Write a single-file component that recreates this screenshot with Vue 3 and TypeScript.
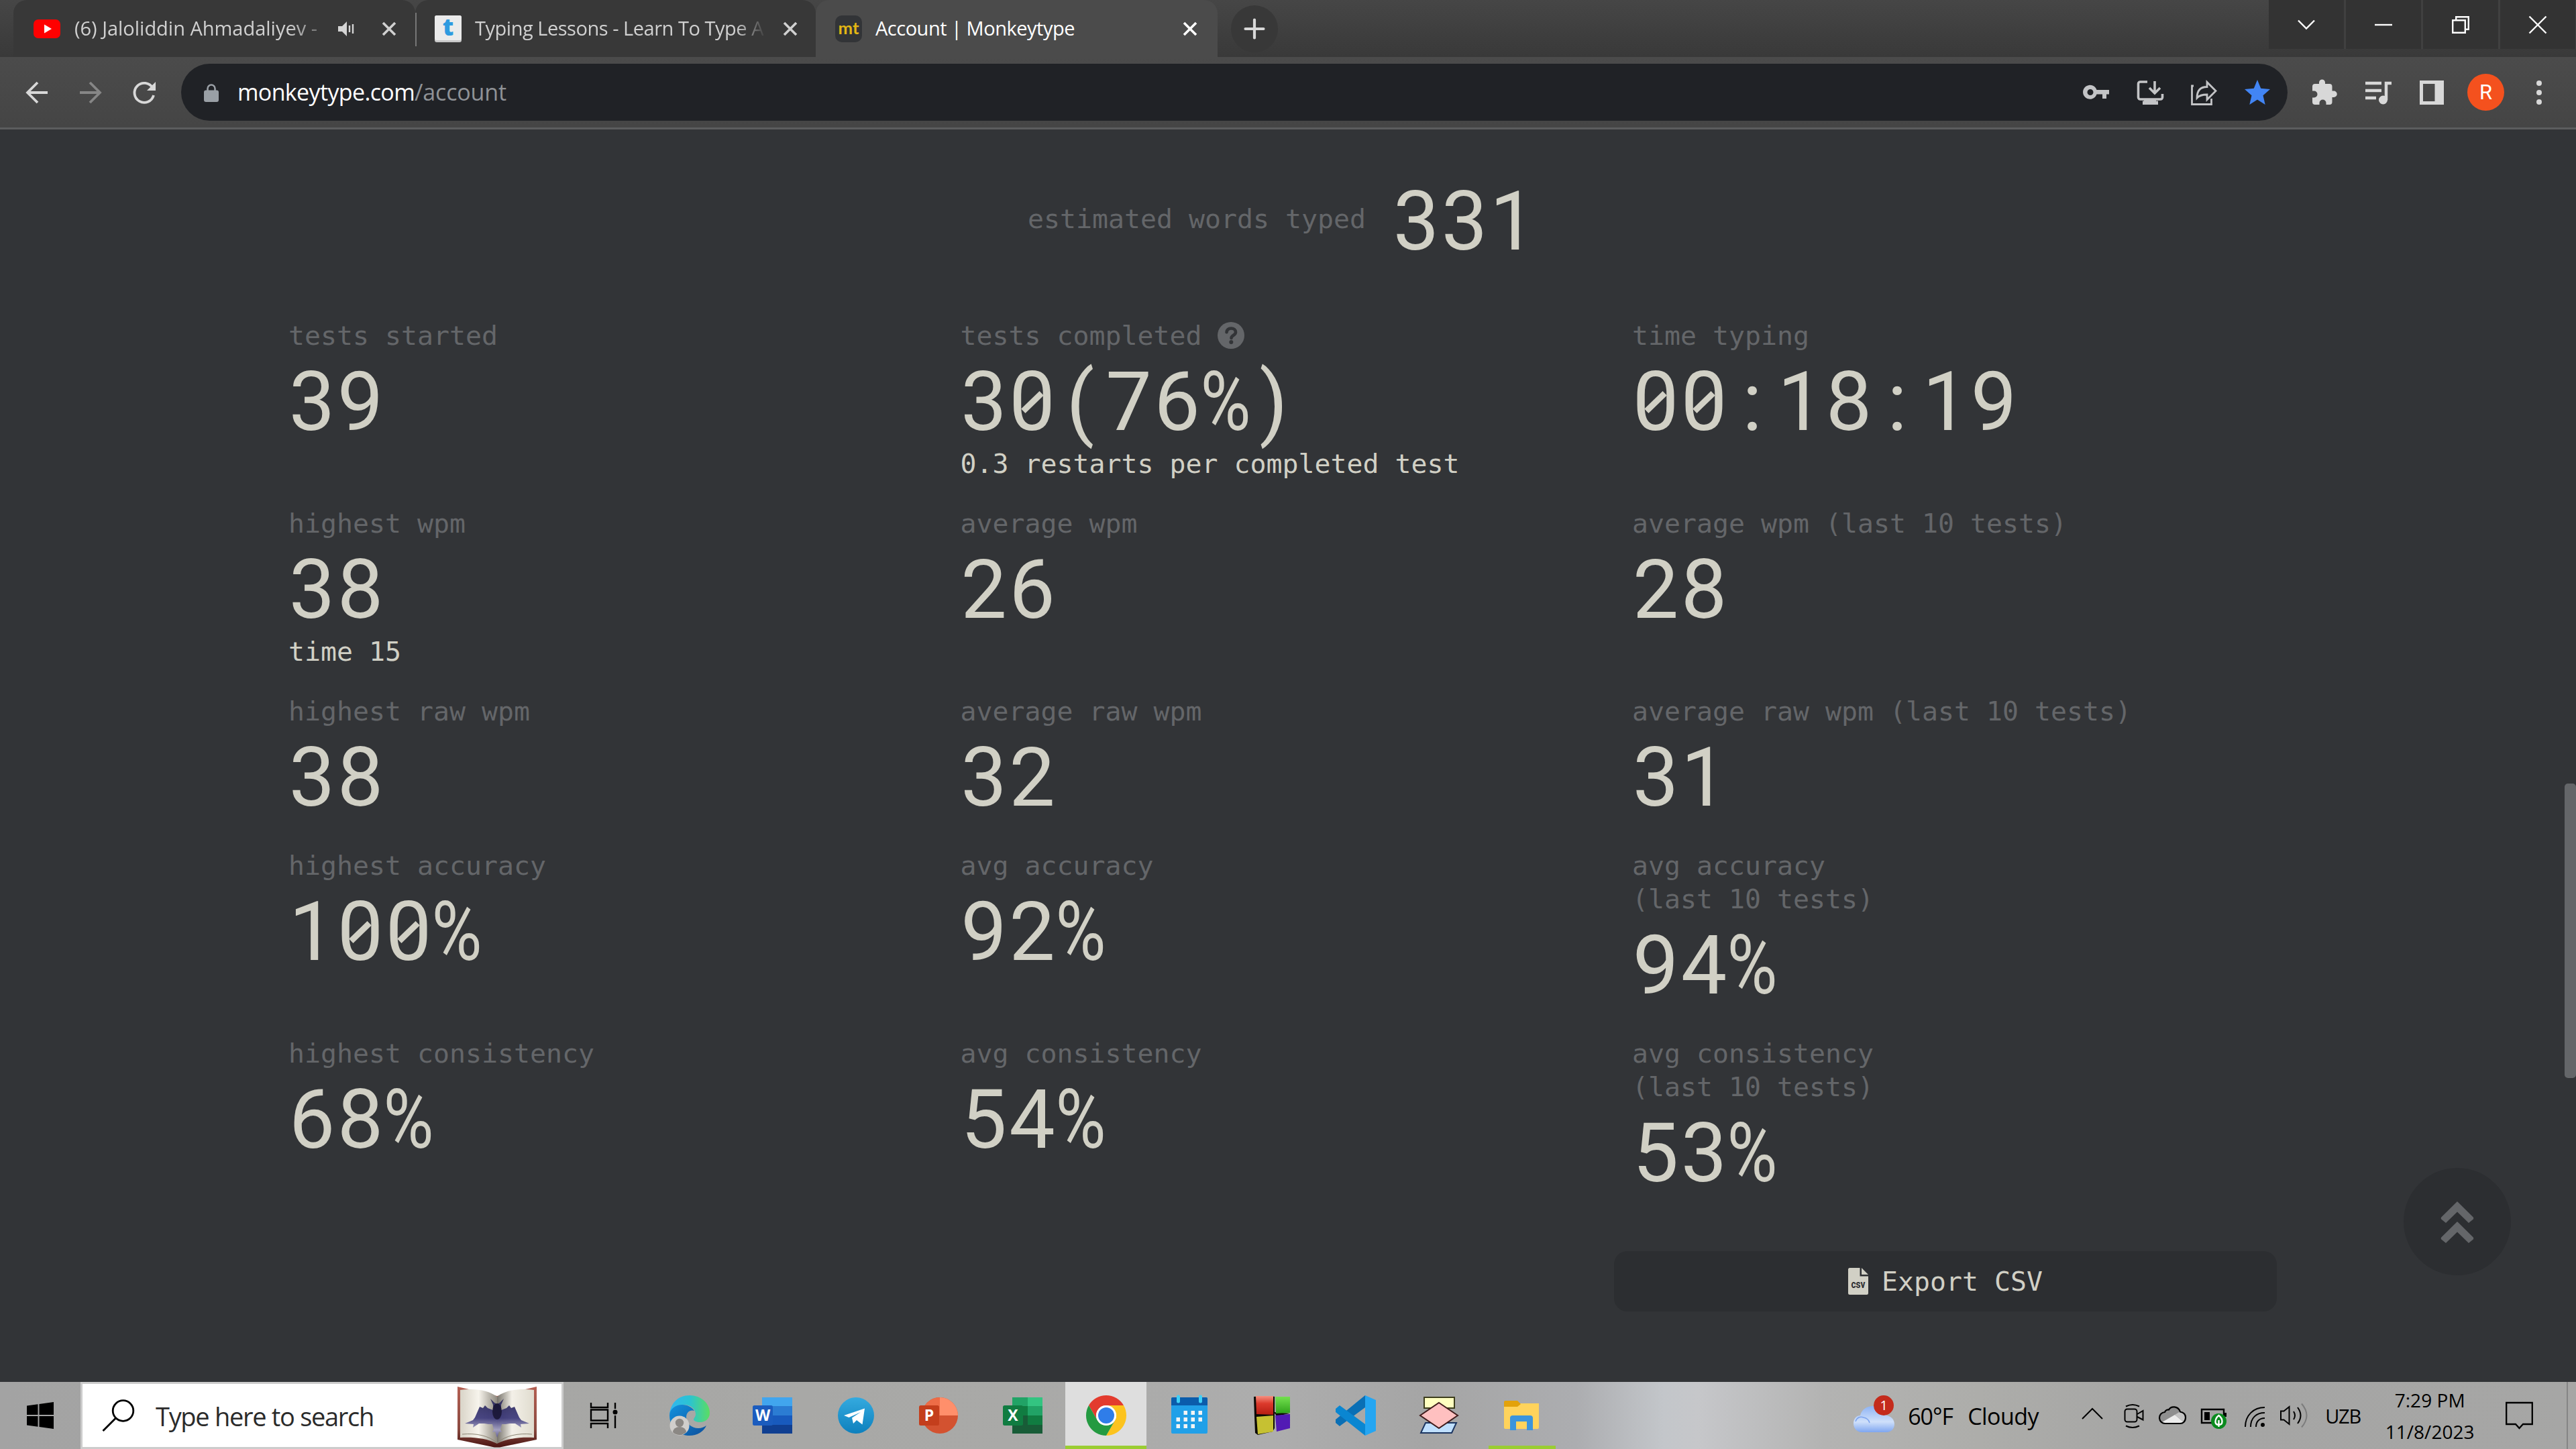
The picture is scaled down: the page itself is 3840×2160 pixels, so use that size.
<script setup lang="ts">
import type { Directive } from 'vue'

interface Stat {
  label: string[]
  value: string
  sub?: string
  help?: boolean
}

const stats: Stat[] = [
  { label: ['tests started'], value: '39' },
  { label: ['tests completed'], value: '30(76%)', sub: '0.3 restarts per completed test', help: true },
  { label: ['time typing'], value: '00:18:19' },
  { label: ['highest wpm'], value: '38', sub: 'time 15' },
  { label: ['average wpm'], value: '26' },
  { label: ['average wpm (last 10 tests)'], value: '28' },
  { label: ['highest raw wpm'], value: '38' },
  { label: ['average raw wpm'], value: '32' },
  { label: ['average raw wpm (last 10 tests)'], value: '31' },
  { label: ['highest accuracy'], value: '100%' },
  { label: ['avg accuracy'], value: '92%' },
  { label: ['avg accuracy', '(last 10 tests)'], value: '94%' },
  { label: ['highest consistency'], value: '68%' },
  { label: ['avg consistency'], value: '54%' },
  { label: ['avg consistency', '(last 10 tests)'], value: '53%' },
]

const glyphClass = (c: string): string => (c === '0' ? 'zero' : c === '%' ? 'pct' : '')

/* Tracks a line of text in or out so that it fills the given width in pixels. */
const vFit: Directive<HTMLElement, number> = {
  mounted(el, binding) {
    const natural = el.getBoundingClientRect().width
    const count = (el.textContent ?? '').length
    el.style.letterSpacing = `${(binding.value - natural) / count}px`
  },
}
</script>

<template>
  <div class="screen">
    <header class="tabstrip">
      <div class="tab first">
        <svg class="fav" viewBox="0 0 40 40"><rect y="6" width="40" height="28" rx="7" fill="#f00" /><path d="M16 13.500l11 6.500-11 6.500z" fill="#fff" /></svg>
        <span class="title t1"><span v-fit="362">(6) Jaloliddin Ahmadaliyev -</span></span>
        <svg class="snd" viewBox="0 0 26 26"><path d="M1 9h6l7-7v22l-7-7H1z" fill="#d4d4d4" /><path d="M18 8v10M23 6v14" stroke="#d4d4d4" stroke-width="2.400" /></svg>
        <svg class="x" viewBox="0 0 22 22"><path d="M2 2l18 18M20 2L2 20" /></svg>
      </div>
      <div class="tab second">
        <svg class="fav" viewBox="0 0 40 40"><rect width="40" height="40" rx="3" fill="#c9c9c9" /><rect width="40" height="37" rx="3" fill="#ebebeb" /><text x="20" y="30" text-anchor="middle" font-family="Open Sans, sans-serif" font-weight="800" font-size="36" fill="#2e9be0">t</text></svg>
        <span class="title t2"><span v-fit="430">Typing Lessons - Learn To Type A</span></span>
        <svg class="x" viewBox="0 0 22 22"><path d="M2 2l18 18M20 2L2 20" /></svg>
      </div>
      <div class="tab active">
        <svg class="fav" viewBox="0 0 40 40"><rect width="40" height="40" rx="10" fill="#323437" /><text x="20" y="28" text-anchor="middle" font-family="Lato, sans-serif" font-weight="700" font-size="24" textLength="31" lengthAdjust="spacingAndGlyphs" fill="#e2b714">mt</text></svg>
        <span class="title t3"><span v-fit="297">Account | Monkeytype</span></span>
        <svg class="x" viewBox="0 0 22 22"><path d="M2 2l18 18M20 2L2 20" /></svg>
      </div>
      <div class="newtab"><svg viewBox="0 0 30 30"><path d="M15 1.500v27M1.500 15h27" stroke="#d8d8d8" stroke-width="4.200" stroke-linecap="round" /></svg></div>
      <div class="winbtns">
        <div><svg viewBox="0 0 26 26"><path d="M1 6.500l12 12 12-12" /></svg></div>
        <div><svg viewBox="0 0 26 26"><path d="M0 13h26" /></svg></div>
        <div><svg viewBox="0 0 26 26"><path d="M1.200 6.200h18.600v18.600H1.200zM6.200 6V1.200h18.600v18.600H20" /></svg></div>
        <div><svg viewBox="0 0 26 26"><path d="M.5.500l25 25M25.500.500l-25 25" /></svg></div>
      </div>
    </header>

    <div class="toolbar">
      <svg class="nav" viewBox="0 0 34 34"><path d="M33 17H3M18 2L3 17l15 15" /></svg>
      <svg class="nav dim" viewBox="0 0 34 34"><path d="M1 17h30M16 2l15 15-15 15" /></svg>
      <svg class="nav" viewBox="0 0 34 34"><path d="M29.500 10A14.500 14.500 0 1 0 31 21" /><path d="M34 1v13H21z" fill="#d8d8d8" stroke="none" /></svg>
      <div class="omnibox">
        <svg class="lock" viewBox="0 0 22 27"><path d="M5.500 11V7a5.500 5.500 0 0 1 11 0v4" fill="none" stroke="#9aa0a6" stroke-width="2.600" /><rect x="0" y="9.500" width="22" height="17.500" rx="3" fill="#9aa0a6" /></svg>
        <span class="url"><span class="host" v-fit="264">monkeytype.com</span><span v-fit="137">/account</span></span>
        <svg class="ob" viewBox="0 0 40 40"><path d="M30 17H20.500a10.500 10.500 0 1 0 0 6.500H29V30h6v-6.500h4V17zM11 25a4.500 4.500 0 1 1 0-9 4.500 4.500 0 0 1 0 9z" fill="#c3c4c6" transform="translate(0 -1)" /></svg>
        <svg class="ob" viewBox="0 0 40 40"><path d="M16 4H5.500A3 3 0 0 0 2.500 7v20a3 3 0 0 0 3 3h30a3 3 0 0 0 3-3v-5M27 3v17M19 13l8 8 8-8" fill="none" stroke="#c3c4c6" stroke-width="3.600" /><path d="M11 30h18v2.500h3V38H9v-5.500h2z" fill="#c3c4c6" /></svg>
        <svg class="ob" viewBox="0 0 40 40"><path d="M5 10H2.500v27.500h29V29M10 28c0-12 6-16.500 15-16.500V4.500l13 13-13 13v-7.500c-6 0-11 .5-15 5z" fill="none" stroke="#c3c4c6" stroke-width="2.800" stroke-linejoin="miter" /></svg>
        <svg class="ob" viewBox="0 0 40 40"><path d="M20 1l5.200 12.800L39 15l-10.500 9.200L31.700 38 20 30.600 8.300 38l3.200-13.800L1 15l13.800-1.200z" fill="#4285f4" /></svg>
      </div>
      <svg class="tb" viewBox="0 0 40 40"><path d="M34 17.500h-2.500V11a4 4 0 0 0-4-4H21V5a4.500 4.500 0 0 0-9 0v2H6a4 4 0 0 0-4 4v6.500h2.500a5 5 0 0 1 0 10H2V34a4 4 0 0 0 4 4h6.500v-2.500a5 5 0 0 1 10 0V38h5a4 4 0 0 0 4-4v-7H34a4.700 4.700 0 0 0 0-9.500z" fill="#d8d8d8" /></svg>
      <svg class="tb" viewBox="0 0 40 40"><path d="M1 6h24M1 17h24M1 28h16" stroke="#d8d8d8" stroke-width="4.500" /><circle cx="27.500" cy="31" r="6.500" fill="#d8d8d8" /><path d="M32 31V6h8" stroke="#d8d8d8" stroke-width="4.500" fill="none" /></svg>
      <svg class="tb" viewBox="0 0 40 40"><path d="M2 2h36v36H2zM7 7v26h17.500V7z" fill="#d8d8d8" fill-rule="evenodd" /></svg>
      <div class="avatar">R</div>
      <svg class="dots" viewBox="0 0 8 36"><circle cx="4" cy="4" r="4" /><circle cx="4" cy="18" r="4" /><circle cx="4" cy="32" r="4" /></svg>
    </div>

    <main class="page">
      <div class="estimated">
        <span class="lab">estimated words typed</span>
        <span class="val"><i v-for="(c, k) in '331'" :key="k" :class="glyphClass(c)">{{ c }}</i></span>
      </div>
      <div class="grid">
        <section v-for="(s, i) in stats" :key="i" class="stat">
          <div v-for="(l, j) in s.label" :key="j" class="lab">{{ l }}<svg v-if="s.help" class="help" viewBox="0 0 40 40"><circle cx="20" cy="20" r="20" fill="#646669" /><path d="M13.500 15.200c.5-4 3-5.700 6.700-5.700 4 0 6.800 2.200 6.800 5.700 0 4.600-6.500 4.400-6.500 8.800" fill="none" stroke="#323437" stroke-width="4.600" stroke-linecap="round" /><circle cx="20.300" cy="30" r="3" fill="#323437" /></svg></div>
          <div class="val"><i v-for="(c, k) in s.value" :key="k" :class="glyphClass(c)">{{ c }}</i></div>
          <div v-if="s.sub" class="sub">{{ s.sub }}</div>
        </section>
      </div>
      <div class="export">
        <svg viewBox="0 0 30 40"><path d="M2.500 0H17.500v12.500H30V37.500A2.500 2.500 0 0 1 27.500 40h-25A2.500 2.500 0 0 1 0 37.500v-35A2.500 2.500 0 0 1 2.500 0zM20 0l10 10H20z" fill="#d1d0c5" /><text x="15" y="30" text-anchor="middle" font-family="Roboto, sans-serif" font-weight="700" font-size="16" textLength="21" lengthAdjust="spacingAndGlyphs" fill="#2c2e31">csv</text></svg>
        <span>Export CSV</span>
      </div>
      <div class="totop"><svg viewBox="0 0 50 62"><path id="chev" d="M25 0L1.200 23.500q-1.200 1.500 0 3L8 32 25 15.600 42 32l6.800-5.500q1.200-1.500 0-3zM25 30L1.200 53.500q-1.200 1.500 0 3L8 62l17-16.400L42 62l6.800-5.500q1.200-1.500 0-3z" fill="#646669" /></svg></div>
      <div class="thumb"></div>
    </main>

    <footer class="taskbar">
      <div class="start"><svg viewBox="0 0 40 40"><path d="M0 5.500l16.500-2.300v15.900H0zM18.500 2.900L40 0v19.100H18.500zM0 20.900h16.500v15.900L0 34.500zM18.500 20.900H40V40l-21.500-2.900z" /></svg></div>
      <div class="search">
        <svg class="mag" viewBox="0 0 48 48"><circle cx="31.500" cy="17" r="15.300" /><path d="M20.500 28L1.500 47" /></svg>
        <span class="hint"><span v-fit="325">Type here to search</span></span>
        <svg class="book" viewBox="0 0 120 92">
          <defs>
            <linearGradient id="pgl"><stop offset="0" stop-color="#d9d4c8" /><stop offset=".5" stop-color="#f7f4ec" /><stop offset="1" stop-color="#8f8a80" /></linearGradient>
            <linearGradient id="pgr"><stop offset="0" stop-color="#77736b" /><stop offset=".4" stop-color="#f3f0e8" /><stop offset="1" stop-color="#e0dccf" /></linearGradient>
            <linearGradient id="cov" x2="0" y2="1"><stop offset="0" stop-color="#b45f52" /><stop offset=".7" stop-color="#8b4a40" /><stop offset="1" stop-color="#4a1512" /></linearGradient>
            <linearGradient id="ink" x2="0" y2="1"><stop offset="0" stop-color="#2a2758" /><stop offset=".5" stop-color="#3a3779" /><stop offset=".8" stop-color="#a5a2c4" /><stop offset="1" stop-color="#5a5796" /></linearGradient>
          </defs>
          <path d="M1 1l59 14L119 1v79L64 91.500h-8L1 80z" fill="url(#cov)" />
          <path d="M5 6c22-3 42 0 55 10v70C45 78 25 76 5 77z" fill="url(#pgl)" />
          <path d="M115 6c-22-3-42 0-55 10v70c15-8 35-10 55-9z" fill="url(#pgr)" />
          <path d="M8 72c20-2 40 2 52 13 12-11 32-15 52-13" fill="none" stroke="#8c8574" />
          <path d="M60 27l-4-2-6-6 4 9v8l-8-3-4-4-3 4-5-2-7 16-3 4-12 5 13 1-1 5 9-6 8 0 6 1 6 0 2 8-2 4 4-1 3 9 3-9 4 1-2-4 2-8 6 0 6-1 8 0 9 6-1-5 13-1-12-5-3-4-7-16-5 2-3-4-4 4-8 3v-8l4-9-6 6z" fill="url(#ink)" opacity=".92" />
          <ellipse cx="60" cy="38" rx="7" ry="12" fill="#15122e" opacity=".8" />
        </svg>
      </div>
      <div class="cell"><svg class="tv" viewBox="0 0 42 40"><g fill="none" stroke="#000" stroke-width="2.400"><path d="M2 1v7h25V1M2 39v-7h25v7M2 11.500h25v16H2z" /><path d="M38 1v9M38 20v19" /></g><circle cx="38" cy="15" r="3.500" /></svg></div>
      <div class="cell"><svg class="app" viewBox="0 0 60 60">
        <defs><linearGradient id="e1"><stop offset="0" stop-color="#31b6f0" /><stop offset=".5" stop-color="#2bc3d2" /><stop offset="1" stop-color="#5bdd62" /></linearGradient><linearGradient id="e2" x2="1" y2="1"><stop offset="0" stop-color="#1291dd" /><stop offset="1" stop-color="#0c4f9c" /></linearGradient></defs>
        <path d="M0 28C2 10 14 0 30 0c17 0 30 12 30 26 0 9-7 14-14 14-6 0-10-2-10-4s3-4 3-8c0-8-8-14-18-14C10 14 3 20 0 28z" fill="url(#e1)" />
        <path d="M0 30c0-9 8-16 19-16 8 0 15 4 18 9-6-2-12 2-12 10 0 9 8 16 18 16 5 0 9-2 12-4-4 9-14 15-25 15C13 60 0 47 0 30z" fill="url(#e2)" />
        <circle cx="15" cy="45" r="14.500" fill="#d0cecb" /><circle cx="15" cy="41" r="6.200" fill="#8b8884" /><path d="M5 55a10 8 0 0 1 20 0 14.500 14.500 0 0 1-20 0z" fill="#8b8884" /></svg></div>
      <div class="cell"><svg class="app" viewBox="0 0 60 60"><path d="M14 3h45v14H14z" fill="#41a5ee" /><path d="M14 16h45v14H14z" fill="#2b7cd3" /><path d="M14 30h45v14H14z" fill="#185abd" /><path d="M14 44h45v13H14z" fill="#103f91" /><rect x="0" y="15" width="30" height="30" rx="2.500" fill="#1b5cbe" /><text x="15" y="37.500" class="gl">W</text></svg></div>
      <div class="cell"><svg class="app" viewBox="0 0 60 60"><defs><linearGradient id="tg" x2="0" y2="1"><stop offset="0" stop-color="#34aadf" /><stop offset="1" stop-color="#0e80bd" /></linearGradient></defs><circle cx="30" cy="30" r="27" fill="url(#tg)" /><path d="M12 30l31-10.500-3.500 24-8.500-6.500-5 5-2-8.500L37 25 19.500 33z" fill="#fff" /></svg></div>
      <div class="cell"><svg class="app" viewBox="0 0 60 60"><circle cx="31" cy="30" r="27" fill="#d35230" /><path d="M31 3a27 27 0 0 1 27 27H31z" fill="#ff8f6b" /><path d="M31 3A27 27 0 0 0 4 30h27z" fill="#ed6c47" /><rect x="0" y="15" width="30" height="30" rx="2.500" fill="#c43e1c" /><text x="15" y="37.500" class="gl">P</text></svg></div>
      <div class="cell"><svg class="app" viewBox="0 0 60 60"><path d="M14 3h23v13H14z" fill="#21a366" /><path d="M37 3h22v13H37z" fill="#33c481" /><path d="M14 16h23v14H14z" fill="#107c41" /><path d="M37 16h22v14H37z" fill="#21a366" /><path d="M14 30h45v27H14z" fill="#185c37" /><path d="M37 30h22v14H37z" fill="#107c41" /><rect x="0" y="15" width="30" height="30" rx="2.500" fill="#107c41" /><text x="15" y="37.500" class="gl">X</text></svg></div>
      <div class="cell on"><svg class="app" viewBox="0 0 60 60"><path d="M4 15a30 30 0 0 1 52 0H30a15 15 0 0 0-13 22.500z" fill="#e33b2e" /><path d="M56 15a30 30 0 0 1-26 45l13-22.500A15 15 0 0 0 30 15z" fill="#fcc31e" /><path d="M30 60A30 30 0 0 1 4 15l13 22.500A15 15 0 0 0 43 37.500z" fill="#249a41" /><circle cx="30" cy="30" r="15" fill="#fff" /><circle cx="30" cy="30" r="12" fill="#2f7de9" /></svg></div>
      <div class="cell"><svg class="app" viewBox="0 0 60 60"><rect x="3" y="3" width="54" height="54" rx="2" fill="#21a0e8" /><path d="M3 5a2 2 0 0 1 2-2h50a2 2 0 0 1 2 2v10H3z" fill="#0b5cab" /><path d="M13.500 2v7M46.500 2v7" stroke="#3fd0f7" stroke-width="5" stroke-linecap="round" /><g fill="#f4f4f4"><path d="M21.500 23h5.500v6h-5.500zM32.500 23H38v6h-5.500zM43.500 23H49v6h-5.500zM10.500 33H16v6h-5.500zM21.500 33h5.500v6h-5.500zM32.500 33H38v6h-5.500zM43.500 33H49v6h-5.500zM10.500 43H16v6h-5.500zM21.500 43h5.500v6h-5.500zM32.500 43H38v6h-5.500z" /></g></svg></div>
      <div class="cell"><svg class="app" viewBox="0 0 60 60"><defs><linearGradient id="cr" x2="0" y2="1"><stop offset="0" stop-color="#f58f80" /><stop offset=".4" stop-color="#dc3a2c" /><stop offset="1" stop-color="#b51d12" /></linearGradient><linearGradient id="cg" x2="0" y2="1"><stop offset="0" stop-color="#74e050" /><stop offset="1" stop-color="#2fa31a" /></linearGradient></defs><path d="M2 2l26-1 5 1v47l-3 5-22 5-4-3L3 32z" fill="#0c0a06" /><path d="M32 25l24 2-20 4z" fill="#0c0a06" /><path d="M5 1l26 0v28L6 28z" fill="url(#cr)" /><path d="M34 2h22v24l-21 1z" fill="url(#cg)" /><path d="M6 32l25-2v24L8 58z" fill="#c6c132" /><path d="M34 30l22-2v21l-20 5z" fill="#521bb4" /></svg></div>
      <div class="cell"><svg class="app" viewBox="0 0 60 60"><path d="M44 0v18L6 46l-6-5v-5z" fill="#0a6fb5" /><path d="M0 20l6-5 38 28v17L0 25z" fill="#0a86d1" /><path d="M44 0l16 7v46l-16 7z" fill="#25a6f2" /></svg></div>
      <div class="cell"><svg class="app" viewBox="0 0 60 60"><path d="M8 3h45v16H8z" fill="#ffffc0" stroke="#3d3d1c" stroke-width="2" /><path d="M10 41h46l-7 15H3z" fill="#c0e0ff" stroke="#1c3560" stroke-width="2" /><path d="M30 11l28 19-28 19L2 30z" fill="#ffc0c0" stroke="#401c1c" stroke-width="2" /></svg></div>
      <div class="cell line"><svg class="app" viewBox="0 0 60 60"><path d="M3 12h52v36a2 2 0 0 1-2 2H5a2 2 0 0 1-2-2z" fill="#ffd35c" /><path d="M3 10a2 2 0 0 1 2-2h18l5 5-5 4H3z" fill="#e3a20b" /><path d="M12 52V34a4 4 0 0 1 4-4h26a4 4 0 0 1 4 4v18h-9V39H21v13z" fill="#3b94dc" /></svg></div>

      <div class="weather">
        <svg viewBox="0 0 62 50"><defs><linearGradient id="cl" x2="0" y2="1"><stop offset="0" stop-color="#8fb4f5" /><stop offset=".6" stop-color="#cfe0fa" /><stop offset="1" stop-color="#7fa6f0" /></linearGradient></defs><path d="M13 50C5 50 0 44 0 37c0-8 5-12 10-12C12 16 20 11 29 11c10 0 18 6 20 14 7 1 12 6 12 13 0 7-5 12-12 12z" fill="url(#cl)" /><path d="M3 34c2-6 7-8 12-6 5 1 8 4 9 8" fill="none" stroke="#7ea4ee" stroke-width="1.500" /></svg>
        <span class="badge">1</span>
      </div>
      <span class="w1"><span v-fit="67">60°F</span></span>
      <span class="w2"><span v-fit="106">Cloudy</span></span>
      <svg class="tray" viewBox="0 0 350 80">
        <g fill="none" stroke="#000" stroke-width="2">
          <path d="M4 45l15-15 15 15" />
          <rect x="67.500" y="30.500" width="18" height="19" rx="3.500" /><path d="M86 38l8.500-5v13.500L86 42M69 26.500q10-5 20 0M69 55.500q10 5 20 0" />
        </g>
        <path d="M128 52a8.500 8.500 0 0 1-1-17c1-3 4-4 6-3.500 3-6 14-6 17 3 5 1 8 4 8 8.500 0 6-4 9-8 9z" fill="#8f8f8f" />
        <path d="M123 50l19-11 13 11-5 2h-22z" fill="#ececec" /><path d="M142 39l10-6 6 10-3 7z" fill="#c4c4c4" />
        <path d="M128 52a8.500 8.500 0 0 1-1-17c1-3 4-4 6-3.500 3-6 14-6 17 3 5 1 8 4 8 8.500 0 6-4 9-8 9z" fill="none" stroke="#000" stroke-width="2.200" />
        <path d="M182 31h33v20h-33z" fill="none" stroke="#000" stroke-width="2.400" /><path d="M186 35h8v12h-8zM216 36h3v6h-3z" />
        <circle cx="207.500" cy="48.500" r="11.500" fill="#0a8a1e" /><path d="M207.500 40c-4 3-5 5-5 9 0 3 2 5 5 5s5-2 5-5c0-4-1-6-5-9zM207.500 47v10" fill="none" stroke="#fff" stroke-width="2.400" />
        <g fill="none" stroke="#000" stroke-width="2"><path d="M247 57c0-17 12-29 29-29M255 57c0-13 8-21 21-21M263 57c0-8 5-13 13-13" /></g><circle cx="273" cy="54" r="3" />
        <g fill="none" stroke="#000" stroke-width="2"><path d="M300 33.500h4.500l8-6.500v26l-8-6.500H300z" /><path d="M319 34q4 6 0 12M325 28q9 12 0 24" /><path d="M331 22.500q15 17.500 0 35" stroke="#7c7c7c" /></g>
      </svg>
      <span class="lang"><span v-fit="53">UZB</span></span>
      <div class="clock"><span><span v-fit="105">7:29 PM</span></span><span><span v-fit="133">11/8/2023</span></span></div>
      <svg class="note" viewBox="0 0 42 42"><path d="M1.200 2h38.600v32H26l-5.500 6-5.500-6H1.200z" fill="none" stroke="#000" stroke-width="2.300" /></svg>
      <div class="peek"></div>
    </footer>
  </div>
</template>

<style>
body { margin: 0; background: #323437; }
</style>

<style scoped>
.screen { width: 3840px; height: 2160px; display: flex; flex-direction: column; overflow: hidden; background: #323437; font-family: "Open Sans", "Noto Sans", sans-serif; }
svg { display: block; flex: none; overflow: visible; }
span { white-space: nowrap; }

.tabstrip { height: 85px; flex: none; display: flex; background: linear-gradient(#464646, #393939); padding-left: 20px; }
.tab { height: 85px; display: flex; align-items: center; background: #383838; border-radius: 20px 20px 0 0; box-sizing: border-box; color: #d0d0d0; font-size: 29px; }
.first { width: 599px; padding-left: 30px; }
.second { width: 597px; padding-left: 29px; position: relative; }
.second::before { content: ""; position: absolute; left: 0; top: 19px; width: 2px; height: 50px; background: #777; }
.active { width: 599px; padding-left: 29px; background: #4b4b4b; color: #fff; }
.fav { width: 40px; height: 40px; }
.title { line-height: 44px; margin-top: -2px; }
.title > span, .hint > span, .w1 > span, .w2 > span, .lang > span, .clock > span > span, .url > span { display: inline-block; }
.t1 { width: 363px; margin-left: 21px; -webkit-mask-image: linear-gradient(90deg, #000 88%, rgba(0,0,0,.4)); mask-image: linear-gradient(90deg, #000 88%, rgba(0,0,0,.4)); }
.t2 { width: 432px; margin-left: 20px; -webkit-mask-image: linear-gradient(90deg, #000 90%, rgba(0,0,0,.05)); mask-image: linear-gradient(90deg, #000 90%, rgba(0,0,0,.05)); }
.t3 { width: 438px; margin-left: 20px; }
.snd { width: 26px; height: 26px; margin-left: 29px; }
.x { width: 22px; height: 22px; fill: none; stroke: currentColor; stroke-width: 3.6; }
.first .x { margin-left: 40px; }
.second .x { margin-left: 27px; }
.active .x { margin-left: 20px; }
.newtab { width: 70px; height: 70px; margin: 8px 0 0 20px; border-radius: 50%; background: #383838; display: flex; align-items: center; justify-content: center; }
.newtab svg { width: 30px; height: 30px; }
.winbtns { margin-left: auto; display: flex; gap: 3px; height: 73px; background: #404040; padding-right: 1px; }
.winbtns div { width: 112px; background: #333; display: flex; align-items: center; justify-content: center; }
.winbtns svg { width: 26px; height: 26px; fill: none; stroke: #fff; stroke-width: 2.4; }

.toolbar { height: 108px; box-sizing: border-box; flex: none; display: flex; align-items: center; background: linear-gradient(#4b4b4b, #454545); border-bottom: 3px solid #5c5d5e; padding-left: 38px; }
.nav { width: 34px; height: 34px; margin-right: 46px; fill: none; stroke: #d8d8d8; stroke-width: 3.8; }
.dim { stroke: #868686; }
.nav + .nav + .nav { margin-right: 38px; }
.omnibox { width: 3140px; height: 85px; border-radius: 43px; background: #202226; display: flex; align-items: center; box-sizing: border-box; padding-left: 34px; padding-right: 25px; }
.lock { width: 22px; height: 27px; margin-top: 2px; }
.url { color: #8f9296; font-size: 34px; margin-left: 28px; margin-right: auto; margin-top: -2px; }
.host { color: #fff; }
.ob { width: 40px; height: 40px; margin-left: 40px; }
.tb { width: 40px; height: 40px; margin-left: 40px; }
.toolbar .omnibox + .tb { margin-left: 35px; }
.avatar { width: 55px; height: 55px; border-radius: 50%; background: #f4511e; color: #fff; font: 31px/55px Roboto, sans-serif; text-align: center; margin-left: 33px; }
.dots { width: 8px; height: 36px; fill: #d8d8d8; margin-left: 48px; }

.page { flex: 1; position: relative; display: flex; flex-direction: column; background: #323437; font-family: "DejaVu Sans Mono", "Liberation Mono", monospace; font-size: 39.86px; }
.estimated { display: flex; align-items: center; margin: 65px 0 0 1532px; height: 144px; }
.estimated .lab { margin-right: 39px; margin-top: -8px; }
.grid { display: grid; grid-template-columns: repeat(3, 1001.5px); row-gap: 41px; margin: 75px 0 0 430px; }
.lab { color: #646669; line-height: 50px; display: flex; align-items: center; white-space: pre; }
.stat .lab { height: 50px; line-height: 47px; box-sizing: border-box; padding-bottom: 3px; }
.help { width: 40px; height: 40px; margin-left: 24px; margin-top: -1px; }
.val { color: #d1d0c5; font: 122px/146px Roboto, sans-serif; height: 144px; margin-bottom: -5px; white-space: nowrap; display: flex; }
.stat .val { margin-left: -1px; }
.estimated .val { margin-bottom: 0; }
.val i { width: 72px; font-style: normal; display: flex; justify-content: center; position: relative; }
.pct { transform: scaleX(.84); }
.zero::after { content: ""; position: absolute; left: 17px; top: 68px; width: 38px; height: 9px; background: #d1d0c5; transform: rotate(-44deg); }
.sub { color: #d1d0c5; line-height: 50px; }
.export { width: 988px; height: 90px; margin: 79px 0 0 2406px; border-radius: 20px; background: #2c2e31; color: #d1d0c5; display: flex; align-items: center; justify-content: center; gap: 20px; }
.export svg { width: 30px; height: 40px; }
.totop { position: absolute; left: 3583px; top: 1548px; width: 160px; height: 160px; border-radius: 50%; background: #2c2e31; display: flex; align-items: center; justify-content: center; }
.totop svg { width: 50px; height: 62px; margin-top: 2px; }
.thumb { position: absolute; right: 0; top: 975px; width: 17px; height: 439px; background: #646669; border-radius: 5px; }

.taskbar { height: 100px; flex: none; display: flex; align-items: center; color: #000; background: linear-gradient(90deg, #a3a3a3 0, #a7a7a5 900px, #a9a9a7 1500px, #adadad 1900px, #a5a5a5 2130px, #acadb0 2350px, #c3c6ca 2480px, #c6c7ca 2530px, #b3b3b2 2720px, #adadaa 2950px, #a5a5a4 3200px, #a6a6a5 3840px); }
.start { width: 120px; display: flex; justify-content: center; }
.start svg { width: 40px; height: 40px; }
.search { width: 720px; height: 100px; box-sizing: border-box; border: 3px solid #ccc; background: #fff; display: flex; align-items: center; flex: none; }
.mag { width: 48px; height: 48px; margin-left: 29px; fill: none; stroke: #000; stroke-width: 2.8; }
.hint { width: 330px; margin-left: 32px; font-size: 38px; color: #2b2b2b; margin-top: 1px; }
.book { width: 120px; height: 92px; margin-left: 119px; margin-top: 3px; }
.cell { width: 124.100px; height: 100px; display: flex; align-items: center; justify-content: center; flex: none; box-sizing: border-box; }
.search + .cell { margin: 0 4px 0 -2px; }
.tv { width: 42px; height: 40px; }
.app { width: 60px; height: 60px; }
.on { background: linear-gradient(#9acd32, #9acd32) center bottom / 121px 5px no-repeat, linear-gradient(#dedede, #dedede) center / 121px 100px no-repeat; }
.line { background: linear-gradient(#9acd32, #9acd32) center bottom / 100px 5px no-repeat; }
.gl { fill: #fff; font: 700 23px "Open Sans", sans-serif; text-anchor: middle; }
.weather { position: relative; margin-left: 432px; width: 62px; }
.weather svg { width: 62px; height: 50px; }
.badge { position: absolute; left: 30px; top: -5px; width: 30px; height: 30px; border-radius: 50%; background: #c42b1c; color: #fff; font-size: 20px; line-height: 30px; text-align: center; }
.w1, .w2, .lang { font-size: 34px; margin-top: 1px; }
.w1 { width: 70px; margin-left: 19px; }
.w2 { width: 110px; margin-left: 19px; }
.tray { width: 350px; height: 80px; margin-left: 57px; }
.lang { width: 60px; margin-left: 16px; font-size: 29px; }
.clock { width: 136px; margin-left: 28px; display: flex; flex-direction: column; align-items: center; font-size: 28px; line-height: 47px; padding-top: 1px; }
.note { width: 42px; height: 42px; margin-left: 45px; }
.peek { width: 2px; height: 100px; background: #858585; margin-left: 49px; }
</style>
